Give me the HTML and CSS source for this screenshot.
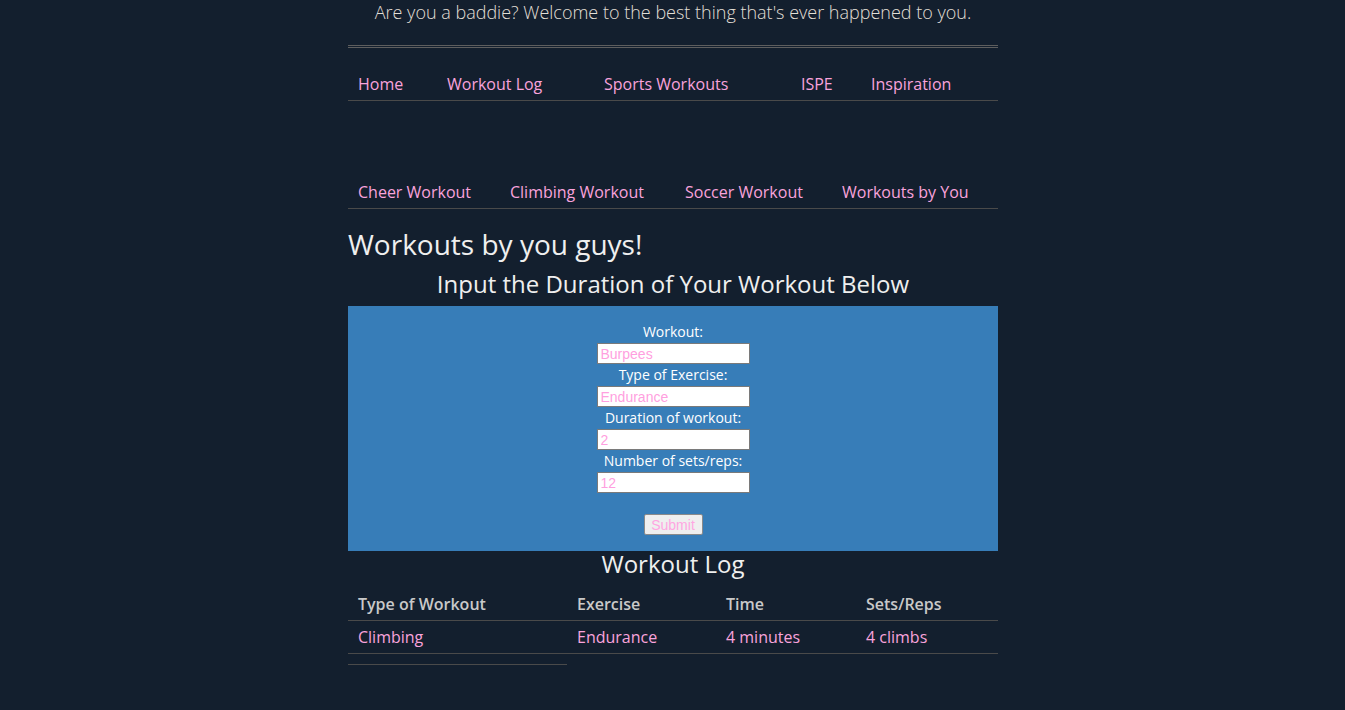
FILE: index.html
```html
<!DOCTYPE html>
<html>
<head>
<meta charset="utf-8">
<link rel="stylesheet" href="styles.css">
</head>
<body>
<div class="page">
  <p class="tagline">Are you a baddie? Welcome to the best thing that's ever happened to you.</p>
  <hr class="rule">
  <nav class="nav nav-main">
    <a href="#">Home</a>
    <a href="#">Workout Log</a>
    <a href="#">Sports Workouts</a>
    <a href="#">ISPE</a>
    <a href="#">Inspiration</a>
  </nav>
  <nav class="nav nav-sub">
    <a href="#">Cheer Workout</a>
    <a href="#">Climbing Workout</a>
    <a href="#">Soccer Workout</a>
    <a href="#">Workouts by You</a>
  </nav>
  <h1 class="title">Workouts by you guys!</h1>
  <h2 class="subtitle form-title">Input the Duration of Your Workout Below</h2>
  <form class="form">
    <label class="lbl">Workout:</label>
    <input class="field" type="text" value="Burpees">
    <label class="lbl">Type of Exercise:</label>
    <input class="field" type="text" value="Endurance">
    <label class="lbl">Duration of workout:</label>
    <input class="field" type="text" value="2">
    <label class="lbl">Number of sets/reps:</label>
    <input class="field" type="text" value="12">
    <div class="spacer"></div>
    <button class="submit" type="button">Submit</button>
  </form>
  <h2 class="subtitle log-title">Workout Log</h2>
  <table class="log">
    <thead>
      <tr><th class="c1">Type of Workout</th><th class="c2">Exercise</th><th class="c3">Time</th><th class="c4">Sets/Reps</th></tr>
    </thead>
    <tbody>
      <tr><td>Climbing</td><td>Endurance</td><td>4 minutes</td><td>4 climbs</td></tr>
      <tr class="empty"><td></td></tr>
    </tbody>
  </table>
</div>
</body>
</html>
```
FILE: styles.css
```css
html, body {
  margin: 0;
  padding: 0;
  background: #131f2e;
  font-family: "Open Sans", "Liberation Sans", sans-serif;
  color: #ececec;
}
body {
  padding-left: 1px;
}
.page {
  width: 650px;
  margin: 0 auto;
}
.tagline {
  margin: 0;
  text-align: center;
  font-size: 18px;
  font-weight: 300;
  line-height: 24px;
  color: #e2dfd6;
}
.rule {
  margin: 21px 0 0 0;
  border: none;
  border-top: 3px double #5e5e5e;
  height: 0;
}
.nav {
  display: grid;
  border-bottom: 1px solid #4a4a4a;
}
.nav a {
  color: #f9a3dc;
  text-decoration: none;
  font-size: 16px;
  line-height: 22px;
  padding: 6px 0 5px 10px;
}
.nav-main {
  margin-top: 19px;
  grid-template-columns: 89px 157px 197px 70px 137px;
}
.nav-sub {
  margin-top: 74px;
  grid-template-columns: 152px 175px 157px 166px;
}
.title {
  margin: 15px 0 0 0;
  font-size: 28px;
  font-weight: 400;
  line-height: 40px;
  color: #efefef;
}
.subtitle {
  margin: 0;
  text-align: center;
  font-size: 24px;
  font-weight: 400;
  line-height: 36px;
  color: #efefef;
}
.form-title {
  margin-top: 2px;
  margin-bottom: 4px;
}
.form {
  display: flex;
  flex-direction: column;
  align-items: center;
  background: #377db8;
  padding: 15px 0 16px;
}
.lbl {
  font-size: 14px;
  line-height: 22px;
  color: #ffffff;
}
.field {
  box-sizing: border-box;
  width: 153px;
  height: 21px;
  margin: 0;
  padding: 1px 3px;
  border: 1px solid #7a7a7a;
  background: #ffffff;
  color: #ff9fe0;
  font-family: "Liberation Sans", Arial, sans-serif;
  font-size: 14px;
}
.spacer {
  height: 21px;
}
.submit {
  box-sizing: border-box;
  width: 59px;
  height: 21px;
  padding: 0;
  border: 1px solid #8a8a8a;
  border-radius: 2px;
  background: #efefef;
  color: #ffa6e2;
  font-family: "Liberation Sans", Arial, sans-serif;
  font-size: 14px;
}
.log-title {
  line-height: 28px;
  margin-top: -1px;
}
.log {
  width: 650px;
  border-collapse: collapse;
  margin-top: 10px;
}
.log th, .log td {
  text-align: left;
  padding: 5px 10px;
  line-height: 22px;
  font-size: 16px;
  border-bottom: 1px solid #4a4a4a;
}
.log th {
  color: #c9c9c9;
  font-weight: 600;
}
.log td {
  color: #f9a3dc;
}
.log .c1 { width: 199px; }
.log .c2 { width: 129px; }
.log .c3 { width: 120px; }
.log .empty td {
  padding: 0;
  height: 10px;
  line-height: 0;
}
```
